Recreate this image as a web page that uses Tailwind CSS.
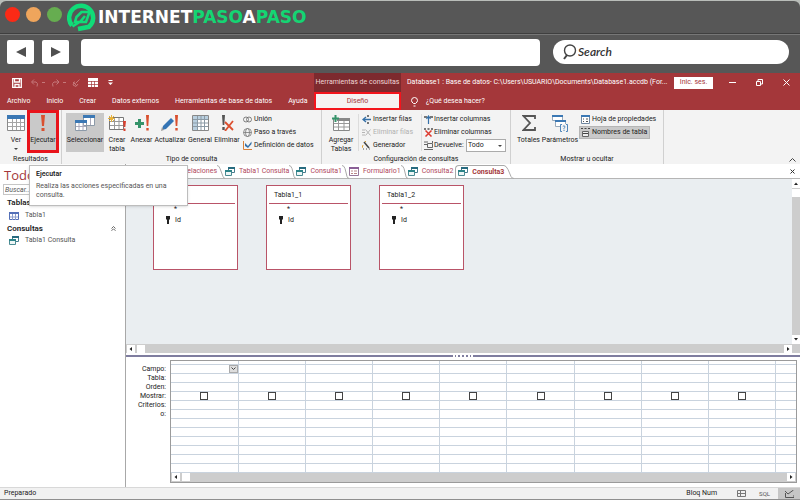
<!DOCTYPE html>
<html lang="es">
  <head>
    <meta charset="UTF-8" />
    <meta name="viewport" content="width=device-width, initial-scale=1" />
    <title>Database1 - Consulta3</title>
    <script src="https://cdn.jsdelivr.net/npm/@tailwindcss/browser@4"></script>
  </head>
  <body class="flex min-h-screen flex-col bg-white font-['Roboto','Open_Sans',sans-serif] text-[7px] leading-[9px] text-[#222]">
    <svg class="hidden">
      <symbol id="i-table" viewBox="0 0 18 16">
        <path d="M.5.5h17v15H.5z" fill="#fff" stroke="#8a8a8a" />
        <path d="M0 0h18v4H0z" fill="#3b78b4" />
        <path d="M1 7.5h16M1 11.5h16M5.5 4v11M9.5 4v11M13.5 4v11" stroke="#a5a5a5" />
      </symbol>
      <symbol id="i-query" viewBox="0 0 10 10">
        <path d="M3.5.5h6v5h-6z" fill="#fff" stroke="#477d8e" />
        <path d="M3 0h7v2H3z" fill="#276b7f" />
        <path d="M.5 3.5h6v5h-6z" fill="#eef6f6" stroke="#4c8b93" />
        <path d="M0 3h7v2H0z" fill="#2b8388" />
      </symbol>
      <symbol id="i-key" viewBox="0 0 6 8">
        <path d="M1 0h4v3L4 4v4H2V4L1 3z" fill="#222" />
      </symbol>
      <symbol id="i-left" viewBox="0 0 8 8"><path d="M5 2v4L2.5 4z" fill="#222" /></symbol>
      <symbol id="i-right" viewBox="0 0 8 8"><path d="M3 2v4l2.5-2z" fill="#222" /></symbol>
    </svg>

    <!-- Marco del navegador -->
    <header class="bg-[#b9bdb9]">
      <div class="mt-px flex h-[33px] items-center rounded-t-md border-b border-[#3f3f3f] bg-[#575757] pl-[5px]">
        <div class="flex gap-[6px] pb-[5px]">
          <span class="size-[15px] rounded-full bg-[#fb2a16]"></span>
          <span class="size-[15px] rounded-full bg-[#efa55c]"></span>
          <span class="size-[15px] rounded-full bg-[#66ad50]"></span>
        </div>
        <svg class="ml-[5px] size-[29px]" viewBox="0 0 29 29" fill="none" stroke="#10dc78">
          <path d="M5 22.5A12 12 0 1 1 22 23.800L11 26" stroke-width="4.500" />
          <path d="M5.500 23.500l7-4.500h6.500l3.500-10h-8l-5 5-1.500 5h5l5-6" stroke-width="2.600" />
        </svg>
        <h1 class="ml-[2px] font-['DejaVu_Sans',sans-serif] text-[17px] leading-5 font-bold text-white">INTERNET<span class="text-[#14d573]">PASO</span>A<span class="text-[#14d573]">PASO</span></h1>
      </div>
      <div class="flex h-[39px] items-center border-t border-[#777] bg-[#575757] pr-[11px] pb-1 pl-[7px]">
        <button aria-label="Atrás" class="flex h-6 w-[27px] items-center justify-center rounded-xs bg-white">
          <svg class="h-[10px] w-[10px]" viewBox="0 0 10 10"><path d="M10 0v10L0 5z" fill="#505050" /></svg>
        </button>
        <button aria-label="Adelante" class="ml-2 flex h-6 w-[27px] items-center justify-center rounded-xs bg-white">
          <svg class="h-[10px] w-[10px]" viewBox="0 0 10 10"><path d="M0 0v10l10-5z" fill="#505050" /></svg>
        </button>
        <input aria-label="Dirección" class="ml-3 h-[27px] min-w-0 flex-1 rounded-sm bg-white px-2 text-xs" />
        <label class="ml-[13px] flex h-6 w-[236px] items-center rounded-full bg-white pl-[9px]">
          <svg class="h-4 w-[15px]" viewBox="0 0 15 16" fill="none" stroke="#444" stroke-width="1.4">
            <ellipse cx="8" cy="6.5" rx="5.5" ry="5.5" /><path d="M5 11l-3 4" stroke-width="2" />
          </svg>
          <input placeholder="Search" aria-label="Search" class="ml-[1px] min-w-0 flex-1 font-['Lato',sans-serif] text-xs leading-4 font-semibold italic outline-none placeholder:text-[#333]" />
        </label>
      </div>
    </header>

    <!-- Barra de título y pestañas -->
    <div class="flex h-[37px] bg-[#a4373a] text-white">
      <div class="flex w-[314px] flex-col">
        <div class="flex h-[19px] items-center pl-3">
          <svg class="size-[10px]" viewBox="0 0 10 10" fill="none" stroke="#fff"><path d="M.7.7h8.600v8.600H.7zM2.500 1v3h5V1M3 9V6.500h4V9" stroke-width="1.300" /></svg>
          <svg class="ml-2 h-2 w-4" viewBox="0 0 16 8" fill="none" stroke="#c5787a"><path d="M4 .5L1.500 3 4 5.500M2 3h4q2.500 1 1 4.500M12 3.500h3" /></svg>
          <svg class="ml-[5px] h-2 w-4" viewBox="0 0 16 8" fill="none" stroke="#c5787a"><path d="M5.500.5L8 3 5.500 5.500M8 3H3Q.5 4 2 7.500M12 3.500h3" /></svg>
          <svg class="ml-[5px] size-2" viewBox="0 0 8 8" fill="none" stroke="#c5787a"><path d="M7.500.5L3.500 4.500M1 3l4 4M2.500 2.500L1 6l3 1.500L6 5" /></svg>
          <svg class="ml-2 h-[9px] w-[10px]" viewBox="0 0 10 9"><path d="M0 0h10v9H0z" fill="#fff" /><path d="M0 3.500h10M0 6.500h10M3.500 3v6M6.500 3v6" stroke="#a4373a" stroke-width=".7" /></svg>
          <svg class="ml-[10px] h-[5px] w-[5px]" viewBox="0 0 5 5"><path d="M.5 0h4v1h-4zM0 2.500h5L2.500 5z" fill="#fff" /></svg>
        </div>
        <nav class="flex h-[18px] items-center gap-4 pt-[1px] pl-[7px] whitespace-nowrap">
          <a href="#">Archivo</a><a href="#">Inicio</a><a href="#">Crear</a><a href="#">Datos externos</a><a href="#">Herramientas de base de datos</a><a href="#">Ayuda</a>
        </nav>
      </div>
      <div class="flex w-[87px] flex-col">
        <div class="flex h-[19px] items-center justify-center bg-[#7d2a2e] whitespace-nowrap text-[#f0d5d5]">Herramientas de consultas</div>
        <a href="#" class="flex h-[18px] items-center justify-center border-2 border-[#f4141c] bg-[#f6f2f2] text-[#a4373a]">Diseño</a>
      </div>
      <div class="flex min-w-0 flex-1 flex-col pl-[6px]">
        <div class="flex h-[19px] items-center pr-[10px]">
          <span class="min-w-0 flex-1 truncate">Database1 : Base de datos- C:\Users\USUARIO\Documents\Database1.accdb (For...</span>
          <button class="h-3 w-[39px] bg-white text-[#a4373a]">Inic. ses.</button>
          <button aria-label="Minimizar" class="ml-4"><svg class="size-[7px]" viewBox="0 0 7 7"><path d="M0 3.500h7" stroke="#fff" /></svg></button>
          <button aria-label="Restaurar" class="ml-5"><svg class="size-[7px]" viewBox="0 0 7 7" fill="none" stroke="#fff"><path d="M.5 2.500h4v4h-4zM2 2V.5h4.500V5H5" /></svg></button>
          <button aria-label="Cerrar" class="ml-5"><svg class="size-[7px]" viewBox="0 0 7 7"><path d="M.5.5l6 6M6.500.5l-6 6" stroke="#fff" /></svg></button>
        </div>
        <div class="flex h-[18px] items-center pt-[1px] pl-1">
          <svg class="h-[10px] w-[7px]" viewBox="0 0 7 10" fill="none" stroke="#fff"><path d="M2.500 6.500Q.5 5 .5 3.500a3 3 0 0 1 6 0Q6.500 5 4.500 6.500zM2.500 9h2" /></svg>
          <a href="#" class="ml-2">¿Qué desea hacer?</a>
        </div>
      </div>
    </div>

    <!-- Cinta de opciones -->
    <div class="flex h-[54px] bg-[#f3f3f3] whitespace-nowrap">
      <section class="flex w-[62px] flex-col border-r border-[#d0d0d0]">
        <div class="flex flex-1">
          <button class="flex w-[27px] flex-col items-center pt-[5px] pl-[5px]">
            <svg class="h-4 w-[18px]"><use href="#i-table" /></svg>
            <span class="mt-[5px]">Ver</span>
            <svg class="mt-[3px] h-[2px] w-1" viewBox="0 0 4 2"><path d="M0 0h4L2 2z" fill="#444" /></svg>
          </button>
          <button class="flex h-[43px] w-8 flex-col items-center border-[3px] border-[#e8131b] bg-[#c9c9c9] pt-[2px]">
            <svg class="h-4 w-1" viewBox="0 0 4 16"><path d="M0 0h4l-1 11H1zM.5 13h3v3h-3z" fill="#d9502f" /></svg>
            <span class="mt-[5px]">Ejecutar</span>
          </button>
        </div>
        <h2 class="text-center">Resultados</h2>
      </section>

      <section class="flex w-[260px] flex-col border-r border-[#d0d0d0]">
        <div class="flex flex-1 pl-1">
          <button class="mt-[3px] flex h-[39px] w-[38px] flex-col items-center bg-[#c9c9c9] pt-[2px]">
            <svg class="h-4 w-5" viewBox="0 0 20 16"><path d="M8.500.5h11v10h-11zM.5 5.500h11v10H.5z" fill="#fff" stroke="#8c9aa8" /><path d="M8 0h12v3H8zM0 5h12v3H0z" fill="#3b78b4" /><path d="M4 8v7M8 8v7M1 11.500h10M15.500 3v7" stroke="#aab" /></svg>
            <span class="mt-[5px]">Seleccionar</span>
          </button>
          <button class="flex w-[26px] flex-col items-center pt-[5px]">
            <svg class="h-4 w-[18px]" viewBox="0 0 18 16"><path d="M1.500 2.500h14v12h-14z" fill="#fff" stroke="#777" /><path d="M2 6.500h13M2 10.500h13M6.500 3v11M11 3v11" stroke="#999" /><path d="M0 3.500h7M3.500 0v7M1 1l5 5M6 1L1 6" stroke="#e8b23a" /><path d="M15 6h3l-.7 6h-1.600zM15.500 13.500h2V16h-2z" fill="#d9402f" /></svg>
            <span class="mt-[5px]">Crear</span><span>tabla</span>
          </button>
          <button class="flex w-[23px] flex-col items-center pt-[5px]">
            <svg class="h-4 w-4" viewBox="0 0 16 16"><path d="M4 4h3v3h3v3H7v3H4v-3H1V7h3z" fill="#35936a" /><path d="M12 0h3l-.7 11h-1.600zM12.300 13h2.400v2.500h-2.400z" fill="#d9502f" /></svg>
            <span class="mt-[5px]">Anexar</span>
          </button>
          <button class="flex w-[34px] flex-col items-center pt-[5px]">
            <svg class="h-4 w-[18px]" viewBox="0 0 18 16"><path d="M10 3l3 3-8 8-4 1 1-4z" fill="#3474b4" /><path d="M1 12l2 3-3 1z" fill="#999" /><path d="M14 0h3l-.7 11h-1.600zM14.300 13h2.400v2.500h-2.400z" fill="#d9502f" /></svg>
            <span class="mt-[5px]">Actualizar</span>
          </button>
          <button class="flex w-[26px] flex-col items-center pt-[5px]">
            <svg class="h-4 w-[17px]" viewBox="0 0 17 16"><path d="M.5.5h16v15H.5z" fill="#fff" stroke="#888" /><path d="M1 1h15v3H1zM1 1h4v14H1z" fill="#b9cfdf" /><path d="M1 4.500h15M1 8h15M1 11.500h15M5.500 1v14M9 1v14M12.500 1v14" stroke="#8b9aa5" /></svg>
            <span class="mt-[5px]">General</span>
          </button>
          <button class="flex w-7 flex-col items-center pt-[5px]">
            <svg class="h-4 w-[13px]" viewBox="0 0 13 16"><path d="M1 0h3l-.7 10H1.700zM1.300 12h2.400v3H1.300z" fill="#555" /><path d="M4 7l8 8M12 6l-8 10" stroke="#dc4f2f" stroke-width="1.800" /></svg>
            <span class="mt-[5px]">Eliminar</span>
          </button>
          <div class="ml-[2px] flex flex-col gap-1 pt-[5px]">
            <button class="flex items-center gap-[2px]"><svg class="h-[9px] w-[9px]" viewBox="0 0 9 9" fill="none" stroke="#666" stroke-width=".8"><circle cx="3" cy="4.500" r="2.500" /><circle cx="6" cy="4.500" r="2.500" /></svg>Unión</button>
            <button class="flex items-center gap-[2px]"><svg class="h-[9px] w-[9px]" viewBox="0 0 9 9" fill="none" stroke="#777" stroke-width=".8"><circle cx="4.500" cy="4.500" r="4" /><ellipse cx="4.500" cy="4.500" rx="2" ry="4" /><path d="M.5 4.500h8" /></svg>Paso a través</button>
            <button class="flex items-center gap-[2px]"><svg class="h-[9px] w-[9px]" viewBox="0 0 9 9"><path d="M.5 0v8.500H9" fill="none" stroke="#d7803a" /><path d="M2 2l3 3 3.500-4.500V3L5 7 2 5z" fill="#3570a8" /></svg>Definición de datos</button>
          </div>
        </div>
        <h2 class="text-center">Tipo de consulta</h2>
      </section>

      <section class="flex w-[189px] flex-col border-r border-[#d0d0d0]">
        <div class="flex flex-1">
          <button class="flex w-[36px] flex-col items-center pt-[5px] pl-[2px]">
            <svg class="h-4 w-[18px]" viewBox="0 0 18 16"><path d="M1.500 3.500h16v12h-16z" fill="#fff" stroke="#888" /><path d="M5 3h13v3H5z" fill="#888" /><path d="M2 8.500h15M2 12h15M6.500 6v9M12 6v9" stroke="#999" /><path d="M0 3.500h7M3.500 0v7" stroke="#35936a" stroke-width="2" /></svg>
            <span class="mt-[5px]">Agregar</span><span>Tablas</span>
          </button>
          <div class="my-1 flex flex-col gap-1 border-l border-[#dcdcdc] pt-[1px] pl-[3px]">
            <button class="flex items-center gap-[2px]"><svg class="size-[9px]" viewBox="0 0 9 9"><path d="M5 0h2v2H5zM5 7h2v2H5z" fill="#777" /><path d="M9 4.500H2M4 2L1 4.500 4 7" fill="none" stroke="#3570a8" stroke-width="1.300" /></svg>Insertar filas</button>
            <button disabled class="flex items-center gap-[2px] text-[#b0b0b0]"><svg class="size-[9px]" viewBox="0 0 9 9" stroke="#b5b5b5"><path d="M0 2h3M0 4.500h3M0 7h3M3.500 1.500l5 6M8.500 1.500l-5 6" /></svg>Eliminar filas</button>
            <button class="flex items-center gap-[2px]"><svg class="size-[9px]" viewBox="0 0 9 9"><path d="M2 1l5 6" stroke="#444" stroke-width="1.500" /><path d="M1 4L0 7M3 0l1 1" stroke="#e0a030" /><path d="M1 8h1M4 8h1M7 8h1" stroke="#555" /></svg>Generador</button>
          </div>
          <div class="my-1 ml-auto flex w-[89px] flex-col gap-1 border-l border-[#dcdcdc] pt-[1px] pl-[2px]">
            <button class="flex items-center gap-[1px]"><svg class="size-[9px]" viewBox="0 0 9 9"><path d="M0 1h3v2H0zM6 1h3v2H6z" fill="#777" /><path d="M4.500 9V2M2.500 4l2-3 2 3" fill="none" stroke="#3570a8" stroke-width="1.200" /></svg>Insertar columnas</button>
            <button class="flex items-center gap-[1px]"><svg class="size-[9px]" viewBox="0 0 9 9"><path d="M0 0h2v2H0zM3.500 0h2v2h-2zM7 0h2v2H7z" fill="#777" /><path d="M1.500 2.500l6 6M7.500 2.500l-6 6" stroke="#dc3a2f" stroke-width="1.500" /></svg>Eliminar columnas</button>
            <div class="flex h-[9px] items-center gap-[1px]">
              <svg class="size-[9px]" viewBox="0 0 9 9" fill="none" stroke="#666"><path d="M0 1h4M0 3.500h3M0 8.500h9M3.500 2.500h5v4h-5zM8.500 0v2" /></svg>
              <label for="devuelve">Devuelve:</label>
              <div class="relative mr-1 ml-auto">
                <select id="devuelve" class="block h-[13px] w-10 appearance-none border border-[#ababab] bg-white pl-[1px] text-[7px] leading-[9px]"><option>Todo</option></select>
                <svg class="pointer-events-none absolute top-[6px] right-1 h-[2px] w-1" viewBox="0 0 4 2"><path d="M0 0h4L2 2z" fill="#444" /></svg>
              </div>
            </div>
          </div>
        </div>
        <h2 class="text-center">Configuración de consultas</h2>
      </section>

      <section class="flex w-[153px] flex-col border-r border-[#d0d0d0]">
        <div class="flex flex-1 pl-1">
          <button class="flex w-[27px] flex-col items-center pt-[5px]">
            <svg class="h-4 w-[14px]" viewBox="0 0 14 16" fill="none" stroke="#555" stroke-width="1.800"><path d="M13 4V1H1.500L8 8l-6.500 7H13v-3" /></svg>
            <span class="mt-[5px]">Totales</span>
          </button>
          <button class="flex w-9 flex-col items-center pt-[5px]">
            <svg class="h-[17px] w-4" viewBox="0 0 16 17"><path d="M.5.5h10v5H.5zM3.500 5.500h10v6h-10z" fill="#fff" stroke="#9ab" /><path d="M0 0h11v2H0zM3 5h11v2H3z" fill="#3b78b4" /><path d="M8 9h8v8H8z" fill="#f3f3f3" /><path d="M10 9.500H8.500v7H10M14 9.500h1.500v7H14M10.800 11.500q1.200-1.500 2.200 0 0 1-1 1.800v1M12 15v1" fill="none" stroke="#3b78b4" stroke-width=".9" /></svg>
            <span class="mt-1">Parámetros</span>
          </button>
          <div class="ml-[1px] flex flex-col gap-[2px] pt-[5px]">
            <button class="flex items-center gap-[2px] pl-[2px]"><svg class="size-[9px]" viewBox="0 0 9 9"><path d="M.5.5h8v8h-8z" fill="#fff" stroke="#6f87a0" /><path d="M0 0h9v2H0z" fill="#3b78b4" /><path d="M2 4h1M5 4h2M2 6.500h1M5 6.500h2" stroke="#555" /></svg>Hoja de propiedades</button>
            <button class="flex h-[13px] w-[71px] items-center gap-[2px] border border-[#b5b5b5] bg-[#c9c9c9] pl-[1px]"><svg class="size-[9px]" viewBox="0 0 9 9"><path d="M1.500 3.500h6v5h-6z" fill="#eee" stroke="#666" /><path d="M0 .5h2M3.500.5h2M7 .5h2M2 5.500h5" stroke="#444" /></svg>Nombres de tabla</button>
          </div>
        </div>
        <h2 class="text-center">Mostrar u ocultar</h2>
      </section>
      <button aria-label="Contraer la cinta" class="mt-auto mr-1 mb-[2px] ml-auto"><svg class="h-1 w-[7px]" viewBox="0 0 7 4"><path d="M.5 3.500l3-3 3 3" fill="none" stroke="#444" /></svg></button>
    </div>

    <!-- Panel de navegación y documento -->
    <main class="relative flex flex-1">
      <aside class="w-[126px] shrink-0 border-r border-[#a8a8a8] pl-[3px]">
        <h2 class="h-[20px] pl-[1px] font-['Open_Sans',sans-serif] text-[13px] leading-[22px] text-[#a4373a]">Todo</h2>
        <input placeholder="Buscar..." aria-label="Buscar" class="block h-[11px] w-[116px] border border-[#c6c6c6] px-[1px] italic placeholder:text-[#555]" />
        <h3 class="mt-[2px] h-3 pl-1 text-[8px] leading-3 font-semibold">Tablas</h3>
        <a href="#" class="flex h-[13px] items-center gap-[6px] pl-[6px] text-[#555]">
          <svg class="h-2 w-[10px]" viewBox="0 0 10 8"><path d="M.5.5h9v7h-9z" fill="#fff" stroke="#5470b8" /><path d="M0 0h10v2H0z" fill="#5470b8" /><path d="M3.500 2v6M6.500 2v6M1 5h8" stroke="#8fa0cc" /></svg>Tabla1
        </a>
        <h3 class="flex h-3 items-center justify-between pr-[9px] pl-1 text-[8px] font-semibold">Consultas
          <svg class="size-[5px]" viewBox="0 0 5 5" fill="none" stroke="#444" stroke-width=".8"><path d="M.5 2.500l2-2 2 2M.5 4.800l2-2 2 2" /></svg>
        </h3>
        <a href="#" class="flex h-[13px] items-center gap-[6px] pl-[6px] text-[#555]"><svg class="size-[10px]"><use href="#i-query" /></svg>Tabla1 Consulta</a>
      </aside>

      <div class="flex min-w-0 flex-1 flex-col">
        <nav class="flex h-[15px] items-center border-b border-[#b5b5b5] pt-[1px] whitespace-nowrap text-[#b0485c]">
          <a href="#" class="w-[91px] text-right">Relaciones</a>
          <svg class="h-[14px] w-2" viewBox="0 0 8 14"><path d="M0 .5q2 0 3 3l3 8q1 2 2 2" fill="none" stroke="#aaa" /></svg>
          <a href="#" class="flex items-center gap-1"><svg class="size-[10px]"><use href="#i-query" /></svg>Tabla1 Consulta</a>
          <svg class="h-[14px] w-[7px]" viewBox="0 0 7 14"><path d="M0 .5q2 0 3 3l2 8q1 2 2 2" fill="none" stroke="#aaa" /></svg>
          <a href="#" class="flex items-center gap-1"><svg class="size-[10px]"><use href="#i-query" /></svg>Consulta1</a>
          <svg class="h-[14px] w-[7px]" viewBox="0 0 7 14"><path d="M0 .5q2 0 3 3l2 8q1 2 2 2" fill="none" stroke="#aaa" /></svg>
          <a href="#" class="flex items-center gap-1"><svg class="h-[9px] w-[10px]" viewBox="0 0 10 9"><path d="M.5.5h9v8h-9z" fill="#fff" stroke="#96779a" /><path d="M0 0h10v2H0z" fill="#8a5f96" /><path d="M2 4h2M2 6.500h2M5 4h3M5 6.500h3" stroke="#b88" /></svg>Formulario1</a>
          <svg class="h-[14px] w-[7px]" viewBox="0 0 7 14"><path d="M0 .5q2 0 3 3l2 8q1 2 2 2" fill="none" stroke="#aaa" /></svg>
          <a href="#" class="flex items-center gap-1"><svg class="size-[10px]"><use href="#i-query" /></svg>Consulta2</a>
          <a href="#" class="ml-[2px] flex h-[14px] items-center gap-1 rounded-tl-sm border-t border-l border-[#aaa] pl-[2px] font-bold text-[#a4373a]"><svg class="size-[10px]"><use href="#i-query" /></svg>Consulta3</a>
          <svg class="h-[14px] w-[10px]" viewBox="0 0 10 14"><path d="M0 .5q2 0 4 4l3 7q1 2 3 2" fill="none" stroke="#aaa" /></svg>
          <button aria-label="Cerrar documento" class="mr-[5px] ml-auto"><svg class="size-[5px]" viewBox="0 0 5 5"><path d="M.5.5l4 4M4.500.5l-4 4" stroke="#333" /></svg></button>
        </nav>

        <div class="flex h-[165px] bg-[#eaeef1]">
          <div class="flex flex-1 gap-7 pt-[6px] pl-[27px]">
            <article class="h-[85px] w-[85px] border border-[#b95468] bg-white">
              <h4 class="mx-[2px] h-[18px] border-b border-[#b95468]"></h4>
              <p class="h-2 pl-5 leading-[10px]">*</p>
              <p class="flex h-4 items-center gap-1 pl-[11px]"><svg class="h-2 w-[6px]"><use href="#i-key" /></svg>Id</p>
            </article>
            <article class="h-[85px] w-[85px] border border-[#b95468] bg-white">
              <h4 class="mx-[2px] h-[18px] border-b border-[#b95468] pl-[5px] text-[7px] leading-[19px]">Tabla1_1</h4>
              <p class="h-2 pl-5 leading-[10px]">*</p>
              <p class="flex h-4 items-center gap-1 pl-[11px]"><svg class="h-2 w-[6px]"><use href="#i-key" /></svg>Id</p>
            </article>
            <article class="h-[85px] w-[85px] border border-[#b95468] bg-white">
              <h4 class="mx-[2px] h-[18px] border-b border-[#b95468] pl-[5px] text-[7px] leading-[19px]">Tabla1_2</h4>
              <p class="h-2 pl-5 leading-[10px]">*</p>
              <p class="flex h-4 items-center gap-1 pl-[11px]"><svg class="h-2 w-[6px]"><use href="#i-key" /></svg>Id</p>
            </article>
          </div>
          <div class="flex w-2 flex-col bg-[#cdcdcd]">
            <svg class="h-[9px] w-2 bg-white" viewBox="0 0 8 9"><path d="M2 6h4L4 3.500z" fill="#222" /></svg>
            <span class="mt-px h-2 bg-white"></span>
            <svg class="mt-auto h-[9px] w-2 bg-white" viewBox="0 0 8 9"><path d="M2 3h4L4 5.500z" fill="#222" /></svg>
          </div>
        </div>
        <div class="flex h-[9px] items-center bg-[#cdcdcd] pr-2 pl-[1px]">
          <svg class="size-2 bg-white"><use href="#i-left" /></svg>
          <span class="ml-[2px] h-2 w-2 bg-white"></span>
          <svg class="ml-auto size-2 bg-white"><use href="#i-right" /></svg>
        </div>
        <div class="mt-[2px] flex h-[2px] items-center justify-center bg-[#7f7d9f]"><span class="w-5 border-t-2 border-dotted border-white"></span></div>

        <!-- Cuadrícula QBE -->
        <div class="flex flex-1 pt-[3px] pr-[3px] pb-1">
          <ul class="w-[44px] shrink-0 pt-[5px] pr-1 text-right">
            <li>Campo:</li><li>Tabla:</li><li>Orden:</li><li>Mostrar:</li><li>Criterios:</li><li>o:</li>
          </ul>
          <div class="flex min-w-0 flex-1 flex-col self-start border border-[#9b9b9b]">
            <table class="w-full table-fixed border-collapse text-center"><tbody id="qbe"></tbody></table>
            <div class="flex h-[9px] items-center bg-[#cdcdcd] px-[1px]">
              <svg class="size-2 bg-white"><use href="#i-left" /></svg>
              <span class="ml-[2px] h-2 w-2 bg-white"></span>
              <svg class="ml-auto size-2 bg-white"><use href="#i-right" /></svg>
            </div>
          </div>
        </div>
      </div>

      <div role="tooltip" class="absolute top-[1px] left-[29px] h-[41px] w-[159px] border border-[#bdbdbd] bg-white pt-1 pl-[6px] shadow-sm">
        <p class="font-semibold">Ejecutar</p>
        <p class="mt-[3px] text-[#555]">Realiza las acciones especificadas en una<br />consulta.</p>
      </div>
    </main>

    <footer class="flex h-[13px] items-center border-t border-b border-t-[#d8d8d8] border-b-[#8f8f8f] bg-[#f1f1f1] pl-1">
      <span>Preparado</span>
      <span class="ml-auto">Bloq Num</span>
      <button aria-label="Vista Hoja de datos" class="ml-5"><svg class="h-[7px] w-[9px]" viewBox="0 0 9 7" fill="none" stroke="#777"><path d="M.5.5h8v6h-8zM3.500 1v5M1 3.500h7" /></svg></button>
      <button class="ml-[13px] text-[6px] leading-[9px] text-[#555]">SQL</button>
      <button aria-label="Vista Diseño" class="ml-2 flex h-full w-[22px] items-center justify-center bg-[#c6c6c6]"><svg class="h-2 w-[9px]" viewBox="0 0 9 8" fill="none" stroke="#555"><path d="M0 1l3 3 5.500-4M.5 3v4.500H9V5" /></svg></button>
    </footer>

    <script>
      const COLUMNS = 9;
      const ROWS = 12;
      const SHOW_ROW = 3;

      const cell = (row, col) => {
        if (row === SHOW_ROW && col < COLUMNS) {
          return `<input type="checkbox" aria-label="Mostrar columna ${col + 1}" class="block mx-auto size-2 appearance-none border border-[#444] bg-white" />`;
        }
        if (row === 0 && col === 0) {
          return `<button aria-label="Elegir campo" class="ml-auto flex h-2 w-[9px] items-center justify-center border border-[#aaa] bg-[#ddd]"><svg class="h-[3px] w-[5px]" viewBox="0 0 5 3"><path d="M.5.5l2 2 2-2" fill="none" stroke="#444" /></svg></button>`;
        }
        return "";
      };

      const head = `<tr class="h-[3px]">${"<td class='w-[10.75%] border-r border-b border-[#c9d3de] p-0'></td>".repeat(COLUMNS)}<td class="border-b border-[#c9d3de] p-0"></td></tr>`;
      const rows = Array.from({ length: ROWS }, (_, row) => {
        const cells = Array.from(
          { length: COLUMNS + 1 },
          (_, col) => `<td class="border-r border-b border-[#c9d3de] p-0 last:border-r-0">${cell(row, col)}</td>`
        );
        return `<tr class="h-[9px]">${cells.join("")}</tr>`;
      });
      document.getElementById("qbe").innerHTML = head + rows.join("");
    </script>
  </body>
</html>
